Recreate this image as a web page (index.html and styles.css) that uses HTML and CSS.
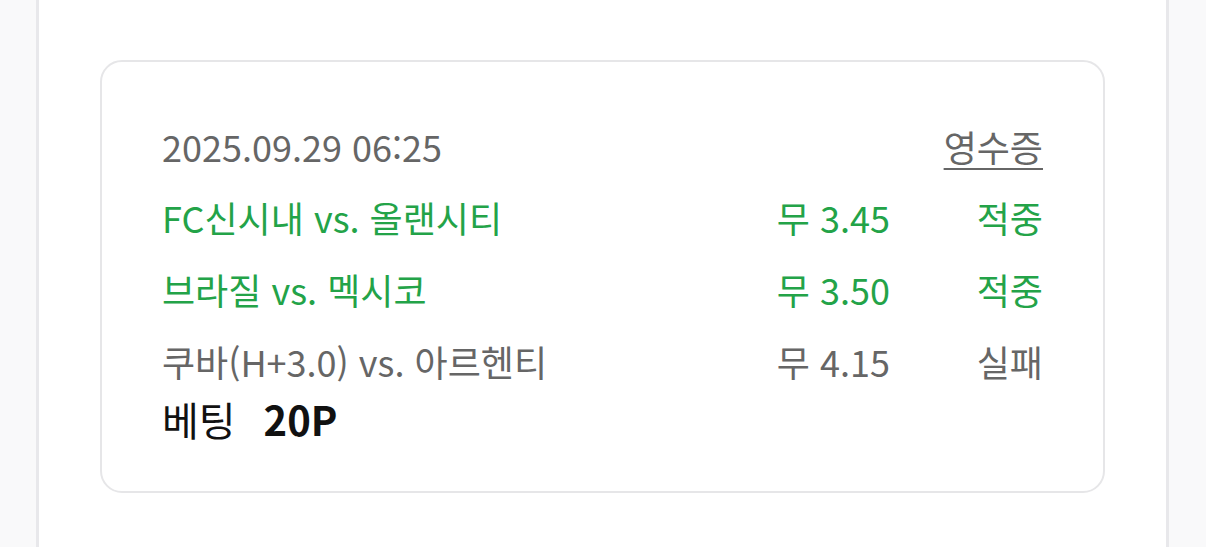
FILE: index.html
```html
<!DOCTYPE html>
<html lang="ko">
<head>
<meta charset="utf-8">
<link rel="stylesheet" href="styles.css">
</head>
<body>
<div class="page">
  <div class="card">
    <div class="head">
      <span class="date">2025.09.29 06:25</span>
      <a class="receipt">영수증</a>
    </div>
    <div class="games">
      <div class="game win">
        <span class="name">FC신시내 vs. 올랜시티</span>
        <span class="odds">무 3.45</span>
        <span class="result">적중</span>
      </div>
      <div class="game win">
        <span class="name">브라질 vs. 멕시코</span>
        <span class="odds">무 3.50</span>
        <span class="result">적중</span>
      </div>
      <div class="game lose">
        <span class="name">쿠바(H+3.0) vs. 아르헨티</span>
        <span class="odds">무 4.15</span>
        <span class="result">실패</span>
      </div>
    </div>
    <div class="bet">
      <span class="bet-label">베팅</span>
      <span class="bet-value">20P</span>
    </div>
  </div>
</div>
</body>
</html>
```

FILE: styles.css
```css
*, *::before, *::after {
  box-sizing: border-box;
}
html, body {
  margin: 0;
  padding: 0;
}
body {
  background: #f9f9fa;
  font-family: "Noto Sans CJK KR", "Noto Sans", sans-serif;
  height: 547px;
  overflow: hidden;
}
.page {
  margin-left: 36px;
  width: 1133px;
  height: 547px;
  background: #ffffff;
  border-left: 3px solid #e8e8eb;
  border-right: 3px solid #e8e8eb;
  padding: 60px 61px 0;
}
.card {
  border: 2px solid #e6e6e8;
  border-radius: 22px;
  padding: 58px 60px 46px;
}
.head {
  display: flex;
  justify-content: space-between;
  align-items: center;
  height: 52px;
  font-size: 36px;
  line-height: 52px;
  color: #666666;
}
.receipt {
  color: #666666;
  text-decoration: underline;
  text-decoration-thickness: 2px;
  text-underline-offset: 6px;
}
.games {
  display: flex;
  flex-direction: column;
  gap: 20px;
  margin-top: 19px;
}
.game {
  display: grid;
  grid-template-columns: 1fr auto 153px;
  font-size: 36px;
  line-height: 52px;
  height: 52px;
}
.game .odds, .game .result {
  text-align: right;
}
.win {
  color: #23a348;
}
.lose {
  color: #666666;
}
.bet {
  display: flex;
  align-items: center;
  margin-top: 6px;
  height: 52px;
  font-size: 40px;
  line-height: 52px;
  color: #111111;
}
.bet-value {
  font-weight: 700;
  margin-left: 28px;
}
```
